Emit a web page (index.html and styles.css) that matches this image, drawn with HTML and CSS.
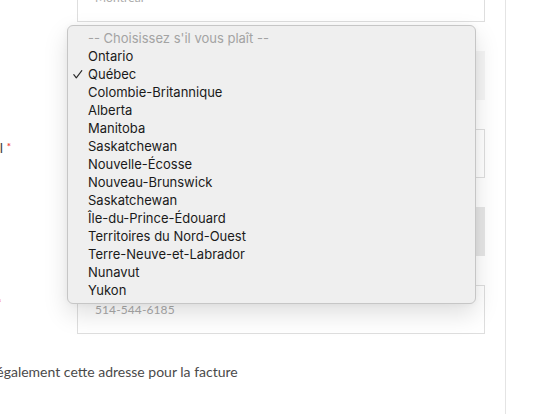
FILE: index.html
```html
<!DOCTYPE html>
<html lang="fr">
<head>
<meta charset="utf-8">
<link rel="stylesheet" href="styles.css">
</head>
<body>
<div class="page">
  <form class="form">
    <div class="row">
      <label class="lbl">Ville <span class="req">*</span></label>
      <div class="field"><span class="val">Montréal</span></div>
    </div>
    <div class="row">
      <label class="lbl">Province <span class="req">*</span></label>
      <div class="field field-select"><span class="val dark">Québec</span></div>
    </div>
    <div class="row">
      <label class="lbl">Code postal <span class="req">*</span></label>
      <div class="field"><span class="val">H2X 1Y4</span></div>
    </div>
    <div class="row">
      <label class="lbl">Pays</label>
      <div class="field field-disabled"><span class="val">Canada</span></div>
    </div>
    <div class="row">
      <label class="lbl">Téléphone <span class="req">*</span></label>
      <div class="field"><span class="val">514-544-6185</span></div>
    </div>
    <div class="check-row">
      <span class="box"></span>
      <span class="check-text">Utiliser également cette adresse pour la facture</span>
    </div>
  </form>

  <div class="menu">
    <div class="opt placeholder">-- Choisissez s'il vous plaît --</div>
    <div class="opt">Ontario</div>
    <div class="opt selected"><svg class="tick" width="10" height="9" viewBox="0 0 10 9"><path d="M0.8 4.6 L3.3 7.9 L8.8 0.6" fill="none" stroke="#2a2a2a" stroke-width="1.15" stroke-linecap="round" stroke-linejoin="round"/></svg>Québec</div>
    <div class="opt">Colombie-Britannique</div>
    <div class="opt">Alberta</div>
    <div class="opt">Manitoba</div>
    <div class="opt">Saskatchewan</div>
    <div class="opt">Nouvelle-Écosse</div>
    <div class="opt">Nouveau-Brunswick</div>
    <div class="opt">Saskatchewan</div>
    <div class="opt">Île-du-Prince-Édouard</div>
    <div class="opt">Territoires du Nord-Ouest</div>
    <div class="opt">Terre-Neuve-et-Labrador</div>
    <div class="opt">Nunavut</div>
    <div class="opt">Yukon</div>
  </div>
</div>
</body>
</html>
```

FILE: styles.css
```css
* { box-sizing: border-box; }
html, body { margin: 0; padding: 0; background: #fff; }
body { overflow: hidden; }

.page {
  position: relative;
  width: 544px;
  height: 414px;
  overflow: hidden;
  font-family: "Lato", "Liberation Sans", sans-serif;
  font-size: 14px;
  color: #444;
}

.form {
  margin: -27px 0 0 -80px;
  width: 586px;
  height: 480px;
  padding-right: 20px;
  border-right: 1px solid #e4e4e4;
  display: flex;
  flex-direction: column;
  gap: 29px;
}

.row {
  display: grid;
  grid-template-columns: 157px 408px;
  align-items: start;
}

.lbl {
  padding: 10px 0 0 10px;
  line-height: 18px;
  color: #444;
  white-space: nowrap;
}

.req {
  color: #f2463f;
  font-size: 10px;
  font-weight: 700;
  vertical-align: top;
  line-height: 14px;
}

.field {
  height: 49px;
  border: 1px solid #dedede;
  background: #fff;
  display: flex;
  align-items: center;
  padding-left: 17px;
}

.field-select { background: #f5f5f5; border-color: #f5f5f5; }
.field-disabled { background: #e6e6e6; border-color: #e6e6e6; }

.val { color: #a9a9a9; font-size: 12px; letter-spacing: 0.1px; }
.val.dark { color: #444; }

.check-row {
  display: flex;
  align-items: center;
  gap: 8px;
  padding-left: 8px;
  line-height: 18px;
}

.box {
  width: 13px;
  height: 13px;
  border: 1px solid #bbb;
  border-radius: 2px;
}

.check-text { color: #4a4a4a; }

.menu {
  position: absolute;
  left: 67px;
  top: 25px;
  width: 409px;
  padding: 3px 0 4px;
  background: #efefef;
  border: 1px solid #c6c6c6;
  border-radius: 6px;
  box-shadow: 0 10px 24px rgba(0, 0, 0, 0.13), 0 0 6px rgba(0, 0, 0, 0.04);
  font-family: "Inter", "Liberation Sans", sans-serif;
  font-size: 13px;
  color: #1a1a1a;
}

.opt {
  position: relative;
  height: 18px;
  line-height: 18px;
  padding-left: 20px;
  white-space: nowrap;
}

.opt.placeholder { color: #a3a3a3; }

.tick {
  position: absolute;
  left: 5px;
  top: 5px;
}
```
